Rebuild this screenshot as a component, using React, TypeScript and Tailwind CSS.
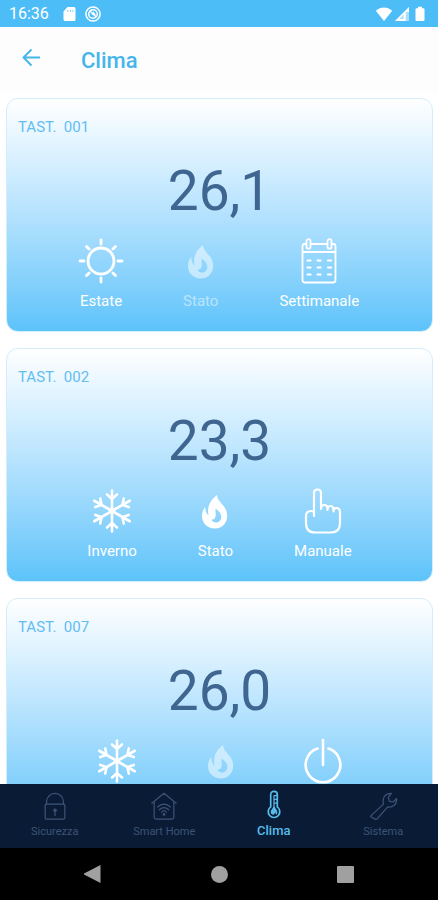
import type { ReactNode } from "react";

type Season = "Estate" | "Inverno";
type Mode = "Settimanale" | "Manuale" | "Spento";

interface Thermostat {
  id: string;
  temperature: string;
  season: Season;
  heating: boolean;
  mode: Mode;
}

const thermostats: Thermostat[] = [
  { id: "001", temperature: "26,1", season: "Estate", heating: false, mode: "Settimanale" },
  { id: "002", temperature: "23,3", season: "Inverno", heating: true, mode: "Manuale" },
  { id: "007", temperature: "26,0", season: "Inverno", heating: false, mode: "Spento" },
];

const SunIcon = () => (
  <svg className="size-12" viewBox="0 0 48 48" fill="none" stroke="currentColor" strokeWidth="2.8" strokeLinecap="round">
    <circle cx="24" cy="24" r="13" />
    <path d="M24 3v4M24 41v4M3 24h4M41 24h4M9.500 9.500l2.600 2.600M35.900 35.900l2.600 2.600M9.500 38.500l2.600-2.600M35.900 12.100l2.600-2.600" />
  </svg>
);

const SnowIcon = () => (
  <svg className="size-12" viewBox="0 0 48 48" fill="none" stroke="currentColor" strokeWidth="2.6" strokeLinecap="round">
    {[0, 60, 120, 180, 240, 300].map((angle) => (
      <path key={angle} d="M24 24V3.500M19 7.500l5 4.500 5-4.500" transform={`rotate(${angle} 24 24)`} />
    ))}
  </svg>
);

const FlameIcon = () => (
  <svg className="size-12" viewBox="0 0 48 48" fill="currentColor">
    <path
      fillRule="evenodd"
      d="M26 8c.4 6 5.300 8.500 8.200 13.200C39 30 34.800 41.500 24 41.500c-8 0-13-5.600-13-12.500 0-3.700 1.200-6.700 3.200-9 .2 3.400 1 6.300 3.300 8.700-1.500-8.700 1-14.700 8.500-20.700zM24.600 21.800c-.4 3.700.8 6.200-.4 8.700-.7 1.400-2 2.200-3.700 2.300.9 1.700 2.500 2.700 4.500 2.700 3.200 0 5.300-2.400 5.300-5.500 0-3.700-2.600-6.200-5.700-8.200z"
    />
  </svg>
);

const CalendarIcon = () => (
  <svg className="size-12" viewBox="0 0 48 48" fill="none" stroke="currentColor" strokeWidth="1.800" strokeLinecap="round">
    <path d="M11 7H9.500Q7.500 7 7.500 9v34q0 2.500 2.500 2.500h28q2.500 0 2.500-2.500V9q0-2-2-2H37M16 7h16M7.500 15h33" />
    <rect x="11.500" y="2.200" width="4" height="9.500" rx="2" />
    <rect x="32.500" y="2.200" width="4" height="9.500" rx="2" />
    <path strokeWidth="2.200" d="M12.500 23.500h3M22.500 23.500h3M33 23.500h3M12.500 30.500h3M22.500 30.500h3M33 30.500h3M12.500 37.500h3M22.500 37.500h3M33 37.500h3" />
  </svg>
);

const HandIcon = () => (
  <svg className="size-12" viewBox="0 0 48 48" fill="none" stroke="currentColor" strokeWidth="2.200" strokeLinecap="round" strokeLinejoin="round">
    <path d="M15 29V6q0-3.500 3.500-3.500T22 6v16q0-4 3.300-4t3.200 4v1q0-4 3-4t3 4v1.500q0-3.500 3-3.500 3.500 0 3.500 4.500V36q0 9.500-9 9.500H16Q7 45.500 7 36v-7c0-4 2.500-5 5.200-5 1.600 0 2.800.7 2.800 2" />
  </svg>
);

const PowerIcon = () => (
  <svg className="size-12" viewBox="0 0 48 48" fill="none" stroke="currentColor" strokeWidth="2.600" strokeLinecap="round">
    <path d="M24 3v25M18.500 11.500a17.300 17.300 0 1 0 11 0" />
  </svg>
);

const seasonIcons: Record<Season, ReactNode> = {
  Estate: <SunIcon />,
  Inverno: <SnowIcon />,
};

const modeIcons: Record<Mode, ReactNode> = {
  Settimanale: <CalendarIcon />,
  Manuale: <HandIcon />,
  Spento: <PowerIcon />,
};

function StatusItem({ label, icon, dimmed }: { label: string; icon: ReactNode; dimmed?: boolean }) {
  return (
    <button type="button" className={dimmed ? "flex flex-col items-center text-white/50" : "flex flex-col items-center text-white"}>
      {/* icons are wider than the short labels, so they may overhang */}
      <span className="-mx-2 flex">{icon}</span>
      <span className="mt-1 text-[15px] leading-6">{label}</span>
    </button>
  );
}

function ThermostatCard({ item }: { item: Thermostat }) {
  return (
    <article className="h-[234px] shrink-0 rounded-xl border border-[#d3eefa] bg-linear-to-b from-white to-[#5cc3fa] pt-4">
      <h2 className="px-[11px] text-[15px] leading-6 whitespace-pre text-[#62bdf2]">{`TAST.  ${item.id}`}</h2>
      <p className="mt-5 text-center text-[55px] leading-16 text-[#3f6690]">{item.temperature}</p>
      <div className="mt-[14px] flex justify-center gap-[61px]">
        <StatusItem label={item.season} icon={seasonIcons[item.season]} />
        <StatusItem label="Stato" icon={<FlameIcon />} dimmed={!item.heating} />
        <StatusItem label={item.mode} icon={modeIcons[item.mode]} />
      </div>
    </article>
  );
}

function StatusBar() {
  return (
    <div className="flex h-[27px] shrink-0 items-center bg-[#4dbdf8] px-2 pt-px text-white">
      <span className="ml-px text-base">16:36</span>
      <svg className="ml-3 size-4" viewBox="0 0 16 16" fill="currentColor">
        <path fillRule="evenodd" d="M6.500 1H13q1.500 0 1.500 1.500v11q0 1.500-1.500 1.500H4q-1.500 0-1.500-1.500V5.500zM6.500 4v1.800h.8V4zM9 4v1.800h.8V4zM11.500 4v1.800h.8V4z" />
      </svg>
      <svg className="ml-2 size-4" viewBox="0 0 16 16" fill="none" stroke="currentColor">
        <circle cx="8" cy="8" r="7.100" strokeWidth="1.500" />
        <circle cx="8" cy="8" r="4.300" strokeWidth="1.500" />
        <path d="M5 5l6 6M7 8.500l1.500-2 2 3" strokeWidth="1.300" />
      </svg>
      <svg className="ml-auto h-4 w-[18px]" viewBox="0 0 18 16" fill="currentColor">
        <path d="M.8 4.800C5.500.3 12.500.3 17.200 4.800L9 15z" />
      </svg>
      <svg className="ml-px size-4" viewBox="0 0 16 16" fill="currentColor">
        <path opacity=".5" d="M15 1v14H1z" />
        <path fillRule="evenodd" d="M15 1v5h-3.200v9H1zM9.500 8.500v4.500H5.500z" />
      </svg>
      <svg className="mr-1 ml-1 h-4 w-3" viewBox="0 0 12 16" fill="currentColor">
        <path d="M4 .8h4v1.500h1.500q1 0 1 1V14q0 1-1 1h-7q-1 0-1-1V3.300q0-1 1-1H4z" />
      </svg>
    </div>
  );
}

const LockIcon = () => (
  <>
    <rect x="5.500" y="14" width="21" height="16" rx="1.500" />
    <path d="M7 14v-2.500a9 9 0 0 1 18 0V14M16 22v4" />
    <circle cx="16" cy="20.500" r="1.300" fill="currentColor" />
  </>
);

const HomeIcon = () => (
  <>
    <path d="M3 13L16 2.500 29 13M5.500 11.500V28q0 2 2 2h17q2 0 2-2V11.500M9 17c4.500-4 9.500-4 14 0M11 20c3.500-3 6.500-3 10 0M13.500 22.500c2-2 3-2 5 0" />
    <circle cx="16" cy="25" r=".8" fill="currentColor" />
  </>
);

const ThermometerIcon = () => (
  <>
    <path strokeWidth="1.800" d="M12.500 18V5q0-3.500 3.500-3.500T19.500 5v13a6.200 6.200 0 1 1-7 0z" />
    <path strokeWidth="1.300" d="M16 6v13M16 6h3M16 10h3M16 14h3" />
    <path fill="currentColor" stroke="none" d="M16 17l3 4.500q1.500 4-1 5l-.5-3-1.500 3q-4 0-3.500-4z" />
  </>
);

const WrenchIcon = () => (
  <path d="M3 26.500L16.500 14C15 7 18 2.500 25 2.500L21.500 7l1.500 4 4 .5 3.500-3.500c.5 6-4 10-9.500 9L9.500 30l-1.500.3L3 27.500z" />
);

const tabs = [
  { label: "Sicurezza", icon: <LockIcon /> },
  { label: "Smart Home", icon: <HomeIcon /> },
  { label: "Clima", icon: <ThermometerIcon />, active: true },
  { label: "Sistema", icon: <WrenchIcon /> },
];

function TabBar() {
  return (
    <nav className="grid h-16 shrink-0 grid-cols-4 bg-[#0a1c35]">
      {tabs.map((tab) => (
        <a
          key={tab.label}
          href="#"
          aria-current={tab.active ? "page" : undefined}
          className={
            tab.active
              ? "flex flex-col items-center pt-[6px] text-[13px] font-medium text-[#58bdec]"
              : "flex flex-col items-center pt-[7px] text-[11px] text-[#3c5378]"
          }
        >
          <svg className="size-[30px]" viewBox="0 0 32 32" fill="none" stroke="currentColor" strokeWidth="1.300" strokeLinecap="round" strokeLinejoin="round">
            {tab.icon}
          </svg>
          <span className="mt-px leading-5">{tab.label}</span>
        </a>
      ))}
    </nav>
  );
}

function SystemBar() {
  return (
    <div className="grid h-[52px] shrink-0 grid-cols-3 bg-black px-[30px] text-[#a0a0a0]">
      <button type="button" aria-label="Back" className="flex items-center justify-center">
        <svg className="size-5" viewBox="0 0 20 20" fill="currentColor">
          <path d="M17.500 1v18L1 10.500v-1z" />
        </svg>
      </button>
      <button type="button" aria-label="Home" className="flex items-center justify-center">
        <span className="size-[17px] rounded-full bg-current" />
      </button>
      <button type="button" aria-label="Recent apps" className="flex items-center justify-center">
        <span className="size-[17px] rounded-[1px] bg-current" />
      </button>
    </div>
  );
}

export default function App() {
  return (
    <div className="flex h-screen flex-col overflow-hidden bg-white font-[Roboto,sans-serif]">
      <StatusBar />
      <header className="flex h-[66px] shrink-0 items-center bg-[#fdfdfd] px-5 text-[#45b5ea]">
        <button type="button" aria-label="Indietro" className="mb-1 flex">
          <svg className="size-[22px]" viewBox="0 0 22 22" fill="none" stroke="currentColor" strokeWidth="1.900">
            <path d="M20 10.500H3.500M11.500 2.500l-8 8 8 8" />
          </svg>
        </button>
        <h1 className="ml-[39px] text-[22px] font-medium">Clima</h1>
      </header>
      <main className="flex min-h-0 flex-1 flex-col gap-4 overflow-y-auto pt-[5px] pr-[5px] pl-[6px] [scrollbar-width:none]">
        {thermostats.map((item) => (
          <ThermostatCard key={item.id} item={item} />
        ))}
      </main>
      <TabBar />
      <SystemBar />
    </div>
  );
}
